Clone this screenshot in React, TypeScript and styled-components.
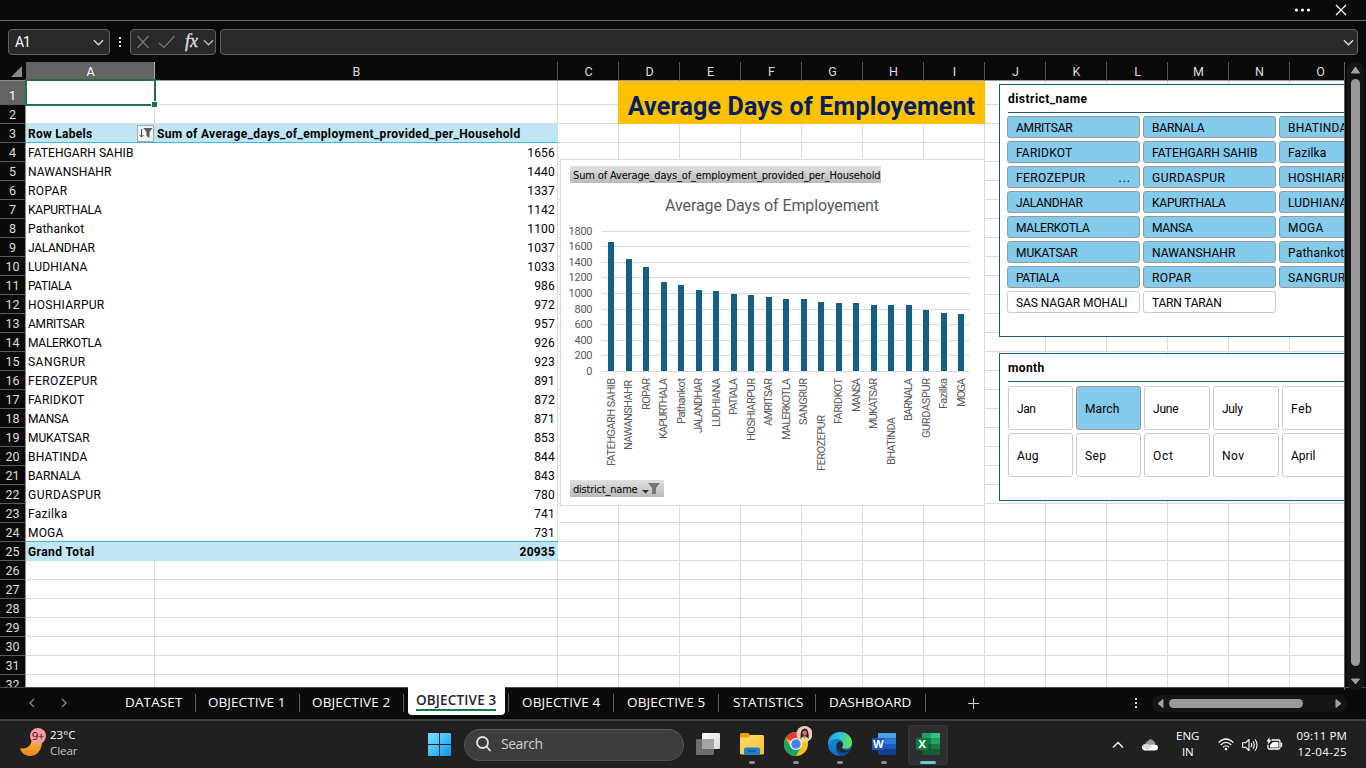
import React, { useLayoutEffect, useRef } from "react";
import styled, { createGlobalStyle, css } from "styled-components";

const Global = createGlobalStyle`
  *, *::before, *::after { box-sizing: border-box; }
  html, body { margin: 0; padding: 0; background: #0a0a0a; overflow: hidden; }
  svg { display: block; flex: none; }
`;

const SHEET_FONT = `Roboto, "Liberation Sans", sans-serif`;
const UI_FONT = `"Open Sans", "Noto Sans", sans-serif`;

/* ---------- text tracked to a fixed width ---------- */

const FitSpan = styled.span`
  display: inline-block;
  white-space: pre;
  flex: none;
`;

function Fit({ w, children }: { w: number; children: string }) {
  const ref = useRef<HTMLSpanElement>(null);
  useLayoutEffect(() => {
    const el = ref.current;
    if (!el) return;
    el.style.letterSpacing = "0px";
    const natural = el.getBoundingClientRect().width;
    const gap = (w + 0.5 - natural) / children.length;
    el.style.letterSpacing = `${gap}px`;
  }, [w, children]);
  return <FitSpan ref={ref}>{children}</FitSpan>;
}

/* ---------- data ---------- */

type District = { name: string; value: number; w: number; chartW: number; drop?: number };

const districts: District[] = [
  { name: "FATEHGARH SAHIB", value: 1656, w: 105, chartW: 88 },
  { name: "NAWANSHAHR", value: 1440, w: 83, chartW: 70, drop: 2 },
  { name: "ROPAR", value: 1337, w: 39, chartW: 32 },
  { name: "KAPURTHALA", value: 1142, w: 73, chartW: 61 },
  { name: "Pathankot", value: 1100, w: 56, chartW: 46 },
  { name: "JALANDHAR", value: 1037, w: 66, chartW: 55 },
  { name: "LUDHIANA", value: 1033, w: 59, chartW: 49 },
  { name: "PATIALA", value: 986, w: 43, chartW: 37 },
  { name: "HOSHIARPUR", value: 972, w: 76, chartW: 63 },
  { name: "AMRITSAR", value: 957, w: 56, chartW: 48 },
  { name: "MALERKOTLA", value: 926, w: 73, chartW: 62 },
  { name: "SANGRUR", value: 923, w: 57, chartW: 47 },
  { name: "FEROZEPUR", value: 891, w: 69, chartW: 56, drop: 37 },
  { name: "FARIDKOT", value: 872, w: 56, chartW: 46 },
  { name: "MANSA", value: 871, w: 40, chartW: 34 },
  { name: "MUKATSAR", value: 853, w: 61, chartW: 51 },
  { name: "BHATINDA", value: 844, w: 59, chartW: 48, drop: 39 },
  { name: "BARNALA", value: 843, w: 52, chartW: 43 },
  { name: "GURDASPUR", value: 780, w: 73, chartW: 60 },
  { name: "Fazilka", value: 741, w: 39, chartW: 31 },
  { name: "MOGA", value: 731, w: 35, chartW: 29 },
];

const slicerDistricts: { name: string; w: number; off?: boolean; more?: boolean }[] = [
  { name: "AMRITSAR", w: 56 }, { name: "BARNALA", w: 52 }, { name: "BHATINDA", w: 59 },
  { name: "FARIDKOT", w: 56 }, { name: "FATEHGARH SAHIB", w: 105 }, { name: "Fazilka", w: 38 },
  { name: "FEROZEPUR", w: 69, more: true }, { name: "GURDASPUR", w: 73 }, { name: "HOSHIARPUR", w: 76 },
  { name: "JALANDHAR", w: 66 }, { name: "KAPURTHALA", w: 73 }, { name: "LUDHIANA", w: 59 },
  { name: "MALERKOTLA", w: 73 }, { name: "MANSA", w: 40 }, { name: "MOGA", w: 35 },
  { name: "MUKATSAR", w: 61 }, { name: "NAWANSHAHR", w: 83 }, { name: "Pathankot", w: 56 },
  { name: "PATIALA", w: 43 }, { name: "ROPAR", w: 39 }, { name: "SANGRUR", w: 57 },
  { name: "SAS NAGAR MOHALI", w: 111, off: true }, { name: "TARN TARAN", w: 69, off: true },
];

const months: [string, number][] = [
  ["Jan", 18], ["March", 34], ["June", 25], ["July", 20], ["Feb", 21],
  ["Aug", 21], ["Sep", 21], ["Oct", 20], ["Nov", 22], ["April", 24],
];

const letters = "ABCDEFGHIJKLMNO".split("");

/* ---------- window frame ---------- */

const Window = styled.div`
  width: 1366px;
  height: 768px;
  display: flex;
  flex-direction: column;
  background: #0a0a0a;
  color: #fff;
  font-family: ${UI_FONT};
  overflow: hidden;
`;

const TitleBar = styled.div`
  height: 21px;
  flex: none;
  display: flex;
  justify-content: flex-end;
  align-items: center;
  gap: 23px;
  padding-right: 19px;
  border-bottom: 1px solid #6a6a6a;
`;

const FormulaBar = styled.div`
  height: 41px;
  flex: none;
  display: flex;
  padding: 8px 8px 0;
`;

const InputBox = styled.div<{ $w?: number; $end?: number }>`
  height: 26px;
  ${(p) => (p.$w ? `width: ${p.$w}px; flex: none;` : "flex: 1;")}
  display: flex;
  align-items: center;
  justify-content: space-between;
  border: 1px solid #626262;
  border-radius: 4px;
  background: #292929;
  padding: 0 ${(p) => p.$end ?? 5}px 0 6px;
  font: 14px/24px ${SHEET_FONT};
`;

const DotGap = styled.div<{ $w: number }>`
  width: ${(p) => p.$w}px;
  height: 26px;
  display: flex;
  align-items: center;
  justify-content: center;
`;

const Workspace = styled.div`
  height: 625px;
  flex: none;
  display: flex;
`;

/* ---------- sheet ---------- */

const Sheet = styled.div`
  position: relative;
  width: 1344px;
  height: 625px;
  overflow: hidden;
  background: #fff;
  color: #000;
  font: 12px/19px ${SHEET_FONT};
  display: grid;
  grid-template-columns: 26px 129px 403px repeat(13, 61px);
  grid-template-rows: 19px 24px repeat(31, 19px);
`;

const Corner = styled.div`
  background: #0a0a0a;
  border-bottom: 1px solid #8d8d8d;
  display: flex;
  justify-content: flex-end;
  align-items: flex-end;
  padding: 0 4px 3px 0;
`;

const ColHead = styled.div<{ $on?: boolean }>`
  background: ${(p) => (p.$on ? "#646464" : "#0a0a0a")};
  color: ${(p) => (p.$on ? "#fff" : "#dedede")};
  border-right: 1px solid ${(p) => (p.$on ? "#b0b0b0" : "#555")};
  border-bottom: 1px solid #9b9b9b;
  padding-left: 1px;
  text-align: center;
  line-height: 20px;
  font-size: 12.5px;
`;

const RowHead = styled.div<{ $on?: boolean }>`
  background: ${(p) => (p.$on ? "#646464" : "#0a0a0a")};
  color: ${(p) => (p.$on ? "#fff" : "#dedede")};
  border-right: 1px solid ${(p) => (p.$on ? "#b0b0b0" : "#8a8a8a")};
  border-bottom: 1px solid #5c5c5c;
  display: flex;
  justify-content: center;
  align-items: flex-end;
  font-size: 12.5px;
  line-height: 17px;
`;

const Cell = styled.div<{ $plain?: "left" | "right"; $band?: "head" | "total"; $align?: string }>`
  border-right: 1px solid #dcdcdc;
  border-bottom: 1px solid #dcdcdc;
  min-width: 0;
  white-space: nowrap;
  display: flex;
  align-items: center;
  justify-content: ${(p) => (p.$align === "right" ? "flex-end" : "flex-start")};
  padding: 2px 2px 0;
  ${(p) => p.$align === "right" && css`
    letter-spacing: 0.2px;
  `}
  ${(p) => p.$plain && css`
    border-bottom-color: transparent;
    ${p.$plain === "left" && "border-right-color: transparent;"}
  `}
  ${(p) => p.$band && css`
    background: #c0e6f5;
    font-weight: 700;
    border-right: none;
    border-bottom: ${p.$band === "head" ? "1px solid #44b3e1" : "none"};
  `}
`;

const TotalCell = styled(Cell)`
  box-shadow: 0 -1px 0 #44b3e1;
  ${(p) => p.$align === "right" && "padding-right: 3px;"}
`;

const Banner = styled.div`
  grid-area: 2 / 5 / 4 / 11;
  margin-left: -1px;
  background: #ffc000;
  color: #002060;
  font: 700 25px/43px ${SHEET_FONT};
  display: flex;
  justify-content: center;
  padding-top: 4px;
`;

const Selection = styled.div`
  position: absolute;
  left: 25px;
  top: 17px;
  width: 131px;
  height: 27px;
  border: 2px solid #1f7246;
  &::after {
    content: "";
    position: absolute;
    right: -4px;
    bottom: -4px;
    width: 7px;
    height: 7px;
    background: #1f7246;
    border: 1px solid #fff;
  }
`;

const FilterButton = styled.div`
  width: 17px;
  height: 17px;
  margin: -2px -1px 0 auto;
  border: 1px solid #a5a9b5;
  background: #f2f5fa;
  display: flex;
  align-items: center;
  justify-content: center;
`;

/* ---------- floating objects on the sheet ---------- */

const ChartBox = styled.div`
  position: absolute;
  left: 560px;
  top: 97px;
  width: 425px;
  height: 347px;
  background: #fff;
  border: 1px solid #d9d9d9;
  padding-top: 6px;
`;

const FieldButton = styled.div<{ $w: number }>`
  width: ${(p) => p.$w}px;
  height: 17px;
  margin-left: 9px;
  padding: 2px 0 0 3px;
  display: flex;
  align-items: center;
  background: linear-gradient(#e1e1e1, #bababa);
  font: 11px/17px "DejaVu Sans Condensed", "DejaVu Sans", sans-serif;
`;

const SlicerBox = styled.div<{ $top: number; $h: number }>`
  position: absolute;
  left: 999px;
  top: ${(p) => p.$top}px;
  width: 420px;
  height: ${(p) => p.$h}px;
  background: #fff;
  border: 1px solid #156082;
  padding-left: 7px;
`;

const SlicerTitle = styled.div`
  height: 28px;
  margin-left: 1px;
  border-bottom: 1px solid #156082;
  font-weight: 700;
  line-height: 29px;
`;

const DistrictGrid = styled.div`
  display: grid;
  grid-template-columns: repeat(3, 133px);
  grid-auto-rows: 22px;
  gap: 3px;
  padding-top: 3px;
`;

const MonthGrid = styled.div`
  display: grid;
  grid-template-columns: 65px 65px 66px 66px 66px;
  grid-auto-rows: 44px;
  gap: 3px;
  padding: 4px 0 0 1px;
`;

const Tile = styled.div<{ $on?: boolean }>`
  display: flex;
  align-items: center;
  justify-content: space-between;
  padding: 2px 8px 0;
  border: 1px solid ${(p) => (p.$on ? "#999" : "#ccc")};
  border-radius: 3px;
  background: ${(p) => (p.$on ? "#83caeb" : "#fff")};
  white-space: nowrap;
`;

const Ellipsis = styled.span`
  letter-spacing: 1px;
`;

/* ---------- scroll bars ---------- */

const VScroll = styled.div`
  width: 22px;
  height: 628px;
  border-left: 1px solid #5a5a5a;
  padding-left: 2px;
`;

const VTrack = styled.div`
  position: relative;
  z-index: 1;
  width: 17px;
  height: 628px;
  border-radius: 8px;
  background: #151515;
  display: flex;
  flex-direction: column;
  align-items: center;
  padding: 4px 0 5px;
`;

const VThumb = styled.div`
  width: 9px;
  height: 587px;
  margin: 5px 0 auto;
  border-radius: 4.5px;
  background: #999;
`;

const HTrack = styled.div`
  width: 195px;
  height: 17px;
  margin: 0 19px 0 15px;
  border-radius: 8px;
  background: #151515;
  display: flex;
  align-items: center;
  padding: 0 5px;
`;

const HThumb = styled.div`
  width: 134px;
  height: 9px;
  margin: 0 auto 0 5px;
  border-radius: 4.5px;
  background: #999;
`;

/* ---------- tab strip ---------- */

const TabStrip = styled.div`
  height: 32px;
  flex: none;
  display: flex;
  align-items: center;
  padding-bottom: 1px;
  border-top: 1px solid #4a4a4a;
  font-size: 13.5px;
  line-height: 17px;
`;

const TabNav = styled.div`
  width: 112px;
  padding-left: 27px;
  display: flex;
  gap: 22px;
`;

const Tab = styled.div<{ $w: number; $pad?: number }>`
  width: ${(p) => p.$w}px;
  height: 18px;
  padding-left: ${(p) => p.$pad ?? 13}px;
  border-right: 1px solid #5c5c5c;
`;

const ActiveTab = styled.div`
  width: 97px;
  height: 28px;
  margin: -1px 4px 0 4px;
  align-self: flex-start;
  background: #fff;
  color: #262626;
  font-weight: 600;
  line-height: 18px;
  border-radius: 0 0 4px 4px;
  padding: 4px 8px 0;
`;

const ActiveLine = styled.div`
  height: 2px;
  width: 80px;
  background: #107c41;
`;

const ActiveSlot = styled.div`
  width: 105px;
  height: 31px;
  align-self: flex-start;
  display: flex;
`;

const SlotRule = styled.div`
  width: 1px;
  height: 18px;
  margin-top: 6px;
  margin-left: -1px;
  background: #5c5c5c;
`;

const TabTools = styled.div`
  flex: 1;
  display: flex;
  align-items: center;
  justify-content: flex-end;
`;

const AddSheet = styled.svg`
  margin-left: 42px;
  margin-right: auto;
`;

/* ---------- taskbar ---------- */

const Taskbar = styled.div`
  height: 49px;
  flex: none;
  display: flex;
  align-items: center;
  background: #202020;
  border-top: 2px solid #3e3e3e;
  font-size: 12px;
`;

const Weather = styled.div`
  width: 428px;
  padding-left: 18px;
  display: flex;
  gap: 4px;
`;

const TwoLines = styled.div<{ $align?: string }>`
  display: flex;
  flex-direction: column;
  align-items: ${(p) => p.$align || "flex-start"};
  font-size: 11.5px;
  line-height: 16px;
  margin-top: -1px;
`;

const Dim = styled.div`
  color: #c8c8c8;
`;

const SearchPill = styled.div`
  width: 220px;
  height: 32px;
  margin: 0 2px 0 13px;
  border-radius: 16px;
  border: 1px solid #505050;
  border-top-color: #5e5e5e;
  background: #3d3d3d;
  color: #d0d0d0;
  display: flex;
  align-items: center;
  gap: 10px;
  padding: 0 0 2px 11px;
  font-size: 14px;
`;

const AppButton = styled.div<{ $active?: boolean }>`
  width: 40px;
  height: 40px;
  margin: 0 2px;
  border-radius: 4px;
  display: flex;
  flex-direction: column;
  align-items: center;
  padding-top: 7px;
  ${(p) => p.$active && "background: #2e2e2e; box-shadow: inset 0 0 0 1px #363636;"}
`;

const RunMark = styled.div<{ $active?: boolean }>`
  width: ${(p) => (p.$active ? 16 : 6)}px;
  height: 3px;
  margin-top: auto;
  margin-bottom: 1px;
  border-radius: 2px;
  background: ${(p) => (p.$active ? "#64cbd5" : "#8f8f8f")};
`;

const ChromeSvg = styled.svg`
  margin: -6px 0 0 4px;
`;

const Tray = styled.div`
  margin-left: auto;
  padding-right: 19px;
  display: flex;
  align-items: center;
`;

const TrayItem = styled.div<{ $gap: number }>`
  margin-left: ${(p) => p.$gap}px;
`;

/* ---------- small drawings ---------- */

const Chevron = ({ w = 11, dir = "down", c = "#dcdcdc" }: { w?: number; dir?: string; c?: string }) => {
  const d = dir === "down" ? "M1 3.5 L6 8.5 L11 3.5" : dir === "up" ? "M1 8.5 L6 3.5 L11 8.5" : dir === "left" ? "M8.5 1 L3.5 6 L8.5 11" : "M3.5 1 L8.5 6 L3.5 11";
  return <svg width={w} height={w} viewBox="0 0 12 12" fill="none" stroke={c} strokeWidth="1.5"><path d={d} /></svg>;
};

const VDots = () => (
  <svg width="2" height="10" viewBox="0 0 2 10" fill="#d8d8d8"><rect width="2" height="2" /><rect y="4" width="2" height="2" /><rect y="8" width="2" height="2" /></svg>
);

const Arrow = ({ d, w, h }: { d: string; w: number; h: number }) => (
  <svg width={w} height={h} viewBox={`0 0 ${w} ${h}`}><path d={d} fill="#a0a0a0" stroke="#a0a0a0" strokeWidth="1" strokeLinejoin="round" /></svg>
);

const MoonIcon = () => (
  <svg width="28" height="34" viewBox="0 0 28 34">
    <defs><linearGradient id="moon" x1="0" y1="0" x2="0" y2="1"><stop offset="0" stopColor="#f9c22e" /><stop offset="1" stopColor="#f08020" /></linearGradient></defs>
    <path d="M23 9 C26 17 21.500 28 12.500 28 C7.500 28 3.500 25.500 2 20.200 C9 22 14.500 17 13.500 10 Z" fill="url(#moon)" />
    <circle cx="20" cy="8" r="8" fill="#ff99a4" />
    <text x="13.800" y="12" fontSize="11.500" fontFamily='"Open Sans", sans-serif' fill="#1b1b1b" textLength="12.500">9+</text>
  </svg>
);

const WindowsLogo = () => (
  <svg width="23" height="23" viewBox="0 0 23 23">
    <defs><linearGradient id="win" x1="0" y1="0" x2="1" y2="1"><stop offset="0" stopColor="#7fdcff" /><stop offset="0.5" stopColor="#3fc0fa" /><stop offset="1" stopColor="#0a93f5" /></linearGradient></defs>
    <path d="M1 0H11V11H0V1Q0 0 1 0Z M12 0H22Q23 0 23 1V11H12Z M0 12H11V23H1Q0 23 0 22Z M12 12H23V22Q23 23 22 23H12Z" fill="url(#win)" />
  </svg>
);

const TaskViewIcon = () => (
  <svg width="24" height="24" viewBox="0 0 24 24">
    <defs><linearGradient id="tv" x1="0" y1="0" x2="1" y2="1"><stop offset="0" stopColor="#fff" /><stop offset="1" stopColor="#d8d8d8" /></linearGradient></defs>
    <rect x="6" y="1" width="18" height="16" rx="1" fill="url(#tv)" />
    <rect x="0" y="7" width="18" height="16" rx="1" fill="#6d6d6d" />
    <rect x="6" y="7" width="12" height="10" fill="#a5a5a5" />
  </svg>
);

const FolderIcon = () => (
  <svg width="24" height="24" viewBox="0 0 24 24">
    <defs><linearGradient id="fo" x1="0" y1="0" x2="1" y2="1"><stop offset="0" stopColor="#ffdf70" /><stop offset="1" stopColor="#fbbd2e" /></linearGradient></defs>
    <path d="M0 2.500Q0 1 1.500 1H8L11 3.500V8H0Z" fill="#e5a50a" />
    <path d="M0 5.500H8.500L11 3H22.500Q24 3 24 4.500V21Q24 22.500 22.500 22.500H1.500Q0 22.500 0 21Z" fill="url(#fo)" />
    <path d="M4 22.500V17.500Q4 15.500 6 15.500H18Q20 15.500 20 17.500V22.500Z" fill="#1583d2" />
    <path d="M8 19H16" stroke="#0a5ca0" strokeWidth="1.500" />
  </svg>
);

const ChromeIcon = () => (
  <ChromeSvg width="28" height="30" viewBox="0 0 28 30">
    <circle cx="12" cy="18" r="12" fill="#fbc116" />
    <path d="M12 18 L1.600 12 A12 12 0 0 1 22.400 12 Z" fill="#e33b2e" />
    <path d="M1.600 12 A12 12 0 0 0 12 30 L17.200 21 L12 18 L6.800 21Z" fill="#1ea362" />
    <circle cx="12" cy="18" r="6" fill="#fff" />
    <circle cx="12" cy="18" r="4.800" fill="#3f83f2" />
    <circle cx="20.500" cy="8" r="8" fill="#f0c9bd" />
    <path d="M16.500 13 Q16 2 21 2.500 Q25.500 3 24.500 13 Z" fill="#2b1d1c" />
    <circle cx="20.700" cy="7" r="2.400" fill="#b5795c" />
    <path d="M16 14.500 Q17 10.500 20.500 10.500 Q24 10.500 25 14.500 Q20.500 17.500 16 14.500Z" fill="#e0dc9a" />
    <path d="M18.500 9.800 L20.500 12.500 L22.800 9.800Z" fill="#b5795c" />
  </ChromeSvg>
);

const EdgeIcon = () => (
  <svg width="24" height="24" viewBox="0 0 24 24">
    <defs>
      <linearGradient id="e1" x1="0" y1="0.200" x2="1" y2="0.400"><stop offset="0" stopColor="#1f9fe5" /><stop offset="0.500" stopColor="#2fc4d8" /><stop offset="1" stopColor="#6be24b" /></linearGradient>
      <linearGradient id="e2" x1="0" y1="0" x2="1" y2="1"><stop offset="0" stopColor="#1a90e0" /><stop offset="1" stopColor="#0d5cb5" /></linearGradient>
    </defs>
    <circle cx="12" cy="12" r="12" fill="url(#e2)" />
    <path d="M0.300 10 C1.500 3.800 6.500 0 12 0 C19 0 24 5 24 10.500 C24 14.500 21 16.500 18 16.500 C15 16.500 13.600 15.500 14.300 14.500 C16 11.500 14 7 9.500 7 C5 7 1.500 9 0.300 13Z" fill="url(#e1)" />
    <path d="M8.500 13.500 C8.500 18 12.500 21 17 20.500 C19.500 20.200 21.500 19.300 22.400 18 C20 22 16 24 12 24 C9 21.500 7 17.500 8.500 13.500Z" fill="#124a93" />
    <path d="M14.300 14.500 C16 11.500 14 9.500 12 9.500 C9.500 9.500 8 12 8.500 15 C9.300 19 13 21.300 17.500 20.500 C20 20 21.800 19 22.600 17.500 C21.500 18 20 18.300 18.500 18.200 C15 18 13.300 16.500 14.300 14.500Z" fill="#202a35" />
  </svg>
);

const OfficeBadge = ({ letter, c }: { letter: string; c: string }) => (
  <>
    <rect x="0" y="6" width="12.500" height="12" rx="1" fill={c} />
    <text x="6.200" y="16" textAnchor="middle" fill="#fff" fontSize="11" fontWeight="700" fontFamily='"Open Sans", sans-serif'>{letter}</text>
  </>
);

const WordIcon = () => (
  <svg width="24" height="24" viewBox="0 0 24 24">
    <path d="M6 2Q6 1 7 1H23Q24 1 24 2V6.500H6Z" fill="#41a5ee" />
    <rect x="6" y="6.500" width="18" height="5.500" fill="#2b7cd3" />
    <rect x="6" y="12" width="18" height="5.500" fill="#185abd" />
    <path d="M6 17.500H24V22Q24 23 23 23H7Q6 23 6 22Z" fill="#103f91" />
    <OfficeBadge letter="W" c="#185abd" />
  </svg>
);

const ExcelIcon = () => (
  <svg width="24" height="24" viewBox="0 0 24 24">
    <path d="M6 2Q6 1 7 1H15V6.500H6Z" fill="#21a366" />
    <path d="M15 1H23Q24 1 24 2V6.500H15Z" fill="#33c481" />
    <rect x="6" y="6.500" width="9" height="5.500" fill="#107c41" />
    <rect x="15" y="6.500" width="9" height="5.500" fill="#21a366" />
    <rect x="6" y="12" width="9" height="5.500" fill="#185c37" />
    <rect x="15" y="12" width="9" height="5.500" fill="#107c41" />
    <path d="M6 17.500H24V22Q24 23 23 23H7Q6 23 6 22Z" fill="#185c37" />
    <OfficeBadge letter="X" c="#107c41" />
  </svg>
);

/* ---------- chart ---------- */

function BarChart() {
  const base = 188;
  const scale = 140 / 1800;
  return (
    <svg width="423" height="297" viewBox="0 0 423 297" fontFamily={SHEET_FONT} fill="#595959">
      <text x="104" y="28" fontSize="16" textLength="214">Average Days of Employement</text>
      {Array.from({ length: 10 }, (_, i) => {
        const y = Math.round(base - i * 200 * scale - 0.2) + 0.5;
        return (
          <g key={i}>
            <line x1="41" x2="409" y1={y} y2={y} stroke="#d9d9d9" />
            <text x="31.500" y={y + 3.5} fontSize="11" textAnchor="end" textLength={i === 0 ? 6 : i < 5 ? 18 : 24}>{i * 200}</text>
          </g>
        );
      })}
      {districts.map((d, i) => {
        const cx = 50 + i * 17.5;
        const start = 195 + (d.drop || 0);
        const h = Math.round(d.value * scale);
        return (
          <g key={d.name}>
            <rect x={Math.round(cx - 3)} y={base - h} width="6" height={h} fill="#156082" />
            <text fontSize="11" textAnchor="end" textLength={d.chartW} transform={`translate(${cx + 3.8} ${start}) rotate(-90)`}>{d.name}</text>
          </g>
        );
      })}
    </svg>
  );
}

/* ---------- sheet body ---------- */

const TopCell = styled(Cell)<{ $at: number; $line: number }>`
  grid-column: ${(p) => p.$at};
  grid-row: ${(p) => p.$line};
`;

function SheetRow({ n }: { n: number }) {
  const d = n >= 4 && n <= 24 ? districts[n - 4] : null;
  const cols = n <= 2 ? letters.filter((l) => l < "D" || l > "I") : letters;
  return (
    <>
      <RowHead $on={n === 1}>{n}</RowHead>
      {cols.map((l) => {
        if (n <= 2) return <TopCell key={l} $at={letters.indexOf(l) + 2} $line={n + 1} />;
        if (l === "A") {
          if (n === 3) return <Cell key={l} $band="head"><Fit w={64}>Row Labels</Fit><FilterButton>
            <svg width="15" height="14" viewBox="0 0 15 14"><path d="M3.500 3V11M1.500 9L3.500 11L5.500 9" stroke="#444" fill="none" /><path d="M5.500 2H14.500L11.500 6V12L8.500 10V6Z" fill="#555b66" /></svg>
          </FilterButton></Cell>;
          if (n === 25) return <TotalCell key={l} $band="total"><Fit w={66}>Grand Total</Fit></TotalCell>;
          if (d) return <Cell key={l} $plain="left"><Fit w={d.w}>{d.name}</Fit></Cell>;
        }
        if (l === "B") {
          if (n === 3) return <Cell key={l} $band="head"><Fit w={363}>Sum of Average_days_of_employment_provided_per_Household</Fit></Cell>;
          if (n === 25) return <TotalCell key={l} $band="total" $align="right">20935</TotalCell>;
          if (d) return <Cell key={l} $plain="right" $align="right">{d.value}</Cell>;
        }
        return <Cell key={l} />;
      })}
    </>
  );
}

export default function App() {
  return (
    <>
      <Global />
      <Window>
        <TitleBar>
          <svg width="18" height="4" viewBox="0 0 18 4" fill="#fff"><circle cx="2.500" cy="2" r="1.600" /><circle cx="8.500" cy="2" r="1.600" /><circle cx="14.500" cy="2" r="1.600" /></svg>
          <svg width="12" height="12" viewBox="0 0 12 12" stroke="#fff" strokeWidth="1.300"><path d="M1 1L11 11M11 1L1 11" /></svg>
        </TitleBar>
        <FormulaBar>
          <InputBox $w={102}><Fit w={14}>A1</Fit><Chevron /></InputBox>
          <DotGap $w={20}><VDots /></DotGap>
          <InputBox $w={86} $end={1}>
            <svg width="66" height="20" viewBox="0 0 66 20" fill="none" stroke="#7a7a7a" strokeWidth="1.200">
              <path d="M0.500 4L11.500 16M11.500 4L0.500 16" />
              <path d="M22 11L27 15.500L37.500 4" />
              <text x="48" y="15" fontSize="18" fontStyle="italic" fontFamily='"Liberation Serif", serif' fill="#e0e0e0" stroke="#e0e0e0" strokeWidth="0.300" textLength="13">fx</text>
            </svg>
            <Chevron w={11} c="#b5b5b5" />
          </InputBox>
          <DotGap $w={4} />
          <InputBox $end={3}><span /><Chevron /></InputBox>
        </FormulaBar>
        <Workspace>
          <Sheet>
            <Corner><svg width="11" height="11" viewBox="0 0 11 11"><path d="M11 0V11H0Z" fill="#8a8a8a" /></svg></Corner>
            {letters.map((l) => <ColHead key={l} $on={l === "A"}>{l}</ColHead>)}
            {Array.from({ length: 32 }, (_, i) => <SheetRow key={i} n={i + 1} />)}
            <Banner><Fit w={347}>Average Days of Employement</Fit></Banner>
            <Selection />
            <ChartBox>
              <FieldButton $w={311}><Fit w={307}>Sum of Average_days_of_employment_provided_per_Household</Fit></FieldButton>
              <BarChart />
              <FieldButton $w={94}>
                <Fit w={64}>district_name</Fit>
                <svg width="24" height="15" viewBox="0 0 24 15"><path d="M4 8H11L7.500 11.500Z" fill="#333" /><path d="M10 1H22L18 6V12H14V6Z" fill="#777" /></svg>
              </FieldButton>
            </ChartBox>
            <SlicerBox $top={22} $h={253}>
              <SlicerTitle><Fit w={79}>district_name</Fit></SlicerTitle>
              <DistrictGrid>
                {slicerDistricts.map((s) => (
                  <Tile key={s.name} $on={!s.off}><Fit w={s.w}>{s.name}</Fit>{s.more && <Ellipsis>...</Ellipsis>}</Tile>
                ))}
              </DistrictGrid>
            </SlicerBox>
            <SlicerBox $top={291} $h={148}>
              <SlicerTitle><Fit w={36}>month</Fit></SlicerTitle>
              <MonthGrid>
                {months.map(([m, w]) => <Tile key={m} $on={m === "March"}><Fit w={w}>{m}</Fit></Tile>)}
              </MonthGrid>
            </SlicerBox>
          </Sheet>
          <VScroll>
            <VTrack>
              <Arrow w={9} h={8} d="M4.500 1L8.500 7H0.500Z" />
              <VThumb />
              <Arrow w={9} h={7} d="M4.500 6L8.500 1H0.500Z" />
            </VTrack>
          </VScroll>
        </Workspace>
        <TabStrip>
          <TabNav><Chevron dir="left" c="#8f8f8f" w={10} /><Chevron dir="right" c="#8f8f8f" w={10} /></TabNav>
          <Tab $w={84}><Fit w={57}>DATASET</Fit></Tab>
          <Tab $w={104} $pad={12}><Fit w={77}>OBJECTIVE 1</Fit></Tab>
          <Tab $w={104} $pad={12}><Fit w={78}>OBJECTIVE 2</Fit></Tab>
          <ActiveSlot>
            <ActiveTab><Fit w={80}>OBJECTIVE 3</Fit><ActiveLine /></ActiveTab>
            <SlotRule />
          </ActiveSlot>
          <Tab $w={105}><Fit w={78}>OBJECTIVE 4</Fit></Tab>
          <Tab $w={105}><Fit w={78}>OBJECTIVE 5</Fit></Tab>
          <Tab $w={97} $pad={14}><Fit w={70}>STATISTICS</Fit></Tab>
          <Tab $w={110}><Fit w={82}>DASHBOARD</Fit></Tab>
          <TabTools>
            <AddSheet width="11" height="11" viewBox="0 0 11 11" stroke="#d0d0d0"><path d="M5.500 0V11M0 5.500H11" /></AddSheet>
            <VDots />
            <HTrack>
              <Arrow w={7} h={9} d="M6 0.500V8.500L1 4.500Z" />
              <HThumb />
              <Arrow w={7} h={9} d="M1 0.500V8.500L6 4.500Z" />
            </HTrack>
          </TabTools>
        </TabStrip>
        <Taskbar>
          <Weather>
            <MoonIcon />
            <TwoLines><Fit w={25}>23°C</Fit><Dim><Fit w={27}>Clear</Fit></Dim></TwoLines>
          </Weather>
          <WindowsLogo />
          <SearchPill>
            <svg width="15" height="16" viewBox="0 0 15 16" fill="none" stroke="#e4e4e4" strokeWidth="1.800"><circle cx="6.500" cy="6.500" r="5.500" /><path d="M10.500 10.500L14 14.500" strokeLinecap="round" /></svg>
            <Fit w={41}>Search</Fit>
          </SearchPill>
          <AppButton><TaskViewIcon /></AppButton>
          <AppButton><FolderIcon /><RunMark /></AppButton>
          <AppButton><ChromeIcon /><RunMark /></AppButton>
          <AppButton><EdgeIcon /><RunMark /></AppButton>
          <AppButton><WordIcon /><RunMark /></AppButton>
          <AppButton $active><ExcelIcon /><RunMark $active /></AppButton>
          <Tray>
            <Chevron dir="up" w={12} c="#f0f0f0" />
            <TrayItem $gap={18}>
              <svg width="16" height="12" viewBox="0 0 16 12"><path d="M3 7Q3 3 6 2Q8 -1 11 1.500Q13 2.500 13.500 5L8 9Z" fill="#9c9c9c" /><path d="M3 11.500Q0 11 0 8.500Q0 5.500 3.500 5.200Q5.500 4.500 7.500 6L12 5.500Q16 5.500 16 8.500Q16 11.500 13 11.500Z" fill="#fff" /><path d="M0.500 7Q2 4.500 5.500 5L10 7.500L5 11Z" fill="#d6d6d6" /></svg>
            </TrayItem>
            <TrayItem $gap={18}><TwoLines $align="center"><Fit w={23}>ENG</Fit><Fit w={11}>IN</Fit></TwoLines></TrayItem>
            <TrayItem $gap={18}>
              <svg width="16" height="13" viewBox="0 0 16 13" fill="none" stroke="#fff" strokeWidth="1.200"><path d="M0.600 4.600Q8 -2.600 15.400 4.600M2.800 7Q8 1.800 13.200 7M5 9.300Q8 6.200 11 9.300" /><circle cx="8" cy="11" r="1.300" fill="#fff" stroke="none" /></svg>
            </TrayItem>
            <TrayItem $gap={8}>
              <svg width="17" height="14" viewBox="0 0 17 14" fill="none" stroke="#fff" strokeWidth="1.100"><path d="M0.600 4.800H3.500L7 1.500V12.500L3.500 9.200H0.600Z" strokeLinejoin="round" /><path d="M9 5Q10.300 7 9 9M11 3.200Q13.500 7 11 10.800M13 1.200Q17.200 7 13 12.800" /></svg>
            </TrayItem>
            <TrayItem $gap={7}>
              <svg width="17" height="15" viewBox="0 0 17 15"><path d="M5.500 3H12.500Q14 3 14 4.500V10.500Q14 12 12.500 12H3.500Q2 12 2 10.500V8" fill="none" stroke="#fff" strokeWidth="1.300" /><path d="M4 10.500V8L7 5H12.500V10.500Z" fill="#fff" /><path d="M15 6V9.500H16V6Z" fill="#fff" stroke="#fff" strokeWidth="0.500" /><path d="M3.500 0L0.500 4.500H2.500L1.500 8L5.500 3.300H3.500Z" fill="#fff" /></svg>
            </TrayItem>
            <TrayItem $gap={14}><TwoLines $align="flex-end"><Fit w={50}>09:11 PM</Fit><Fit w={49}>12-04-25</Fit></TwoLines></TrayItem>
          </Tray>
        </Taskbar>
      </Window>
    </>
  );
}
